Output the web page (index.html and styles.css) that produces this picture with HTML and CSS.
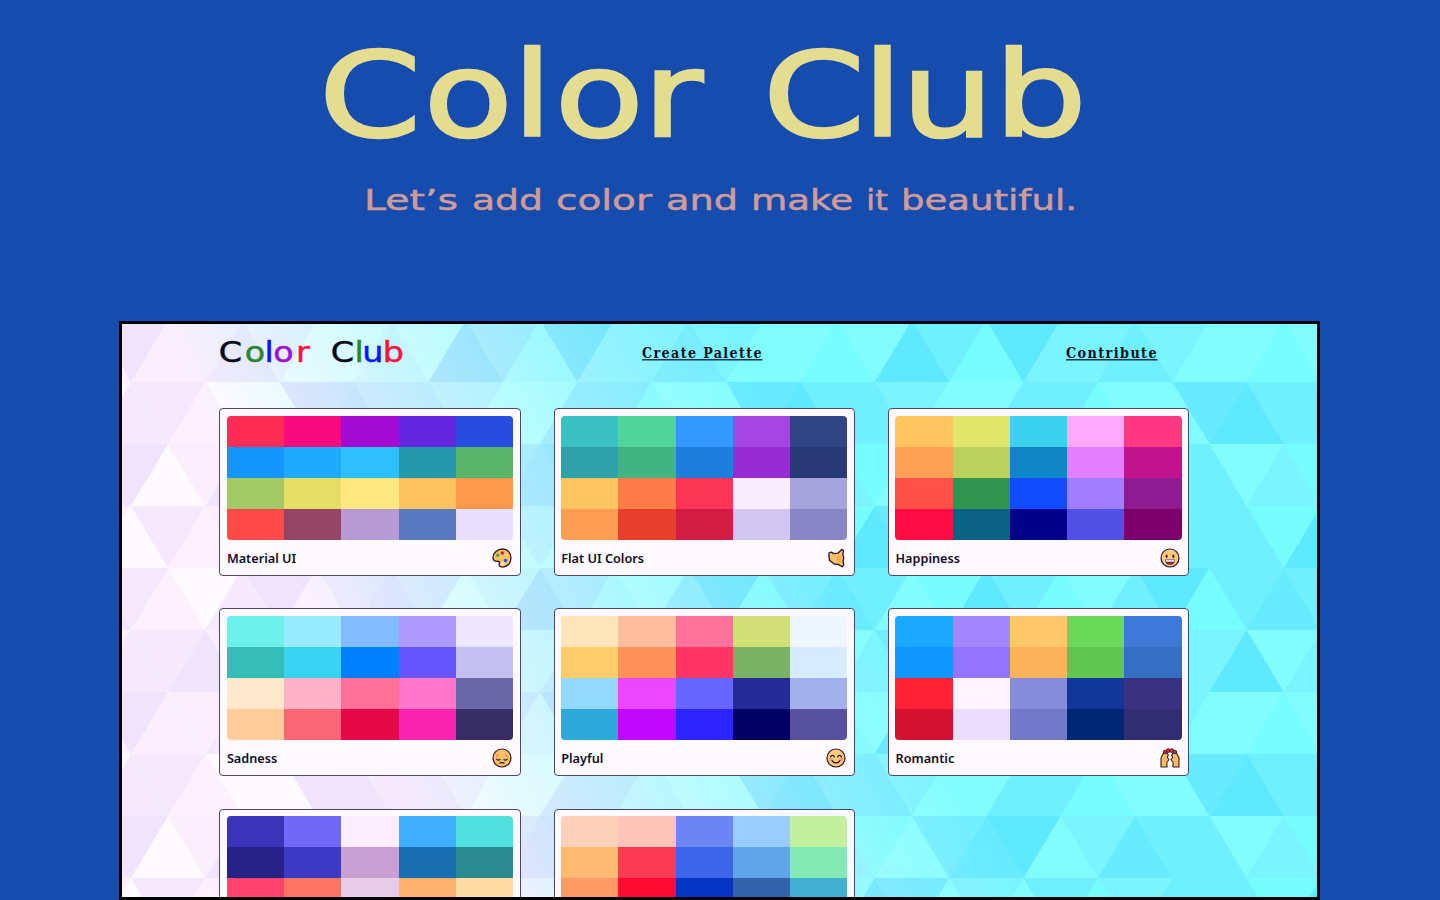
FILE: index.html
```html
<!DOCTYPE html>
<html lang="en">
<head>
<meta charset="utf-8">
<title>Color Club</title>
<link rel="stylesheet" href="styles.css">
</head>
<body>
<header class="hero">
  <svg class="hero-art" viewBox="0 0 1440 321" role="img" aria-label="Color Club">
    <text class="hero-title" transform="scale(1.24 1)" y="136.500" x="257.200 341.500 413 447.200 518.300 590 615.300 695.300 726.800 801.600">Color Club</text>
    <g class="hero-tag">
      <text x="364" y="210" textLength="94" lengthAdjust="spacingAndGlyphs">Let’s</text>
      <text x="472" y="210" textLength="71" lengthAdjust="spacingAndGlyphs">add</text>
      <text x="556" y="210" textLength="96" lengthAdjust="spacingAndGlyphs">color</text>
      <text x="666" y="210" textLength="72" lengthAdjust="spacingAndGlyphs">and</text>
      <text x="751" y="210" textLength="102" lengthAdjust="spacingAndGlyphs">make</text>
      <text x="866" y="210" textLength="22" lengthAdjust="spacingAndGlyphs">it</text>
      <text x="901" y="210" textLength="176" lengthAdjust="spacingAndGlyphs">beautiful.</text>
    </g>
  </svg>
</header>
<main class="frame">
  <svg class="mosaic" viewBox="122 324 1195 573" aria-hidden="true">
    <defs>
      <linearGradient id="fade" gradientUnits="userSpaceOnUse" x1="306" y1="600" x2="750" y2="373">
        <stop offset="0" stop-color="#fff"/>
        <stop offset=".45" stop-color="#868686"/>
        <stop offset=".72" stop-color="#3c3c3c"/>
        <stop offset="1" stop-color="#000"/>
      </linearGradient>
      <mask id="pinkMask" maskUnits="userSpaceOnUse" x="100" y="300" width="1240" height="620">
        <rect x="100" y="300" width="1240" height="620" fill="url(#fade)"/>
      </mask>
    </defs>
    <rect x="122" y="324" width="1195" height="573" fill="#78f7ff"/>
    <g id="cool"></g>
    <g mask="url(#pinkMask)"><rect x="122" y="324" width="1195" height="573" fill="#fbf0fe"/><g id="warm"></g></g>
  </svg>
  <div class="content">
    <nav class="nav">
      <svg class="logo" viewBox="0 0 200 58">
        <text class="logo-text" transform="scale(1.15 1)" y="38" x="7.6 30.2 47.3 55 74.9 98 105 125.6 132.5 150.3">C<tspan class="green">o</tspan><tspan class="blue">l</tspan><tspan class="purple">o</tspan><tspan class="red">r</tspan> C<tspan class="green">l</tspan><tspan class="blue">u</tspan><tspan class="red">b</tspan></text>
      </svg>
      <a class="nav-cell"><svg class="link" viewBox="0 0 130 58"><text x="0" y="34" textLength="121" lengthAdjust="spacingAndGlyphs">Create Palette</text><path d="M0 35.800h120.500"/></svg></a>
      <a class="nav-cell"><svg class="link" viewBox="0 0 130 58"><text x="0" y="34" textLength="92" lengthAdjust="spacingAndGlyphs">Contribute</text><path d="M0 35.800h91.500"/></svg></a>
    </nav>
    <section class="cards">
      <article class="card"><div class="swatches" data-colors="ff2d55 f90b7f a20bd2 6425df 284be0 1496ff 1cabff 2ec0ff 2497aa 5ab56b a3c967 e5de66 fee881 ffc45f ff994e ff4a49 964463 b59ad4 5879bf e9e0ff"></div>
        <div class="card-foot"><span>Material UI</span>
          <svg class="icon" viewBox="0 0 20 20"><path d="M10.8 1C5.6 1 1 4.7 1 9.4c0 2.600 2.100 4.300 4.600 3.900 1.300-.2 2.300.4 1.800 1.800-.8 2.200.3 4 2.900 4 5 0 8.700-4 8.700-9C19 4.700 15.400 1 10.800 1z" fill="#ffc067" stroke="#24152d" stroke-width="1.300"/><circle cx="10.300" cy="5" r="1.800" fill="#ef1b36"/><circle cx="5.700" cy="7.300" r="1.700" fill="#43ad3d"/><circle cx="13.600" cy="12.500" r="1.800" fill="#2057ea"/><circle cx="10.900" cy="15.500" r="1.500" fill="#fff5e6"/><circle cx="14.700" cy="7.500" r="1.300" fill="#ffdb66"/></svg>
        </div></article>
      <article class="card"><div class="swatches" data-colors="3bc1c4 4fd598 3399ff a546e1 2f4585 2ea2a8 42b483 1f7edb 972cd5 283a75 ffc560 ff7c49 fa3555 f9eeff a5a5dc ff9e52 e7402c d21c44 d0c6f0 8986c7"></div>
        <div class="card-foot"><span>Flat UI Colors</span>
          <svg class="icon" viewBox="0 0 20 20"><path d="M3 5l2-.8 3 1.500 4-.5 3.700-3.700 1.800.8-.7 4.500 1 3-.7 3.500.6 3.600-1.500 1.900-4-2.400-4-.4L3.700 12.500 3 9z" fill="#ffc067" stroke="#24152d" stroke-width="1.300" stroke-linejoin="round"/><path d="M16.300 8l-3.500 1M16.300 10.800l-4 .6M16 13.500l-3.300-.2M12.800 7.500l-1.500 3 .8 3" fill="none" stroke="#f09048" stroke-width=".8"/></svg>
        </div></article>
      <article class="card"><div class="swatches" data-colors="ffc560 dfe669 3cd1ec ffa8ff ff3982 ffa056 bdd15e 1186c7 e27eff c0148f ff4f49 319550 114dff a07eff 8f1b91 fc0c43 0b6184 000089 5150e5 7b006c"></div>
        <div class="card-foot"><span>Happiness</span>
          <svg class="icon" viewBox="0 0 20 20"><circle cx="10" cy="10" r="9" fill="#ffc978" stroke="#24152d" stroke-width="1.200"/><ellipse cx="6.600" cy="8.300" rx="1" ry="1.700" fill="#24152d"/><ellipse cx="13.400" cy="8.300" rx="1" ry="1.700" fill="#24152d"/><path d="M5 11.500h10c0 3.500-2 5.300-5 5.300s-5-1.800-5-5.300z" fill="#5c1430"/><path d="M5.300 11.500h9.400l-.5 2.600H5.800z" fill="#e9e0f0" stroke="#75677d" stroke-width=".5"/><path d="M8 16c1-1.300 3-1.300 4 0z" fill="#f32946"/></svg>
        </div></article>
      <article class="card"><div class="swatches" data-colors="6cf2ea 99ecff 82bcff ad9aff ede6ff 35bdb8 3ad4f3 0080ff 6755ff c4c1f0 ffe8ce ffb1c7 ff7099 ff76ca 6967a8 ffcd9b f96675 e60949 f824af 362d63"></div>
        <div class="card-foot"><span>Sadness</span>
          <svg class="icon" viewBox="0 0 20 20"><circle cx="10" cy="10" r="9" fill="#ffc067" stroke="#24152d" stroke-width="1.200"/><path d="M4 8.500l3-1.500M16 8.500l-3-1.500" stroke="#ef7d42" fill="none"/><path d="M4.500 10.800c.8 1.800 3 1.800 3.800.2M11.700 11c.8 1.600 3 1.600 3.800-.2M7.500 15.300c1-1 4-1 5 0" fill="none" stroke="#24152d" stroke-width="1.200"/></svg>
        </div></article>
      <article class="card"><div class="swatches" data-colors="ffe5ba ffbd9e ff729b d2df76 eef6ff ffcc69 ff925a ff3566 7bb365 d8ebff 94daff eb47ff 6666ff 242b98 a3b0ec 2fa8da c108ff 2d25ff 000064 58519f"></div>
        <div class="card-foot"><span>Playful</span>
          <svg class="icon" viewBox="0 0 20 20"><circle cx="10" cy="10" r="9" fill="#ffc978" stroke="#24152d" stroke-width="1.200"/><circle cx="4.700" cy="11.300" r="1.800" fill="#ff9094"/><circle cx="15.300" cy="11.300" r="1.800" fill="#ff9094"/><path d="M4.700 8.800c.8-1.800 2.800-1.800 3.600 0M11.700 8.800c.8-1.800 2.800-1.800 3.600 0M6 12.700c1.800 3 6.200 3 8 0" fill="none" stroke="#24152d" stroke-width="1.300" stroke-linecap="round"/></svg>
        </div></article>
      <article class="card"><div class="swatches" data-colors="1ba9ff a387ff ffc66c 6bda5b 3e79d7 0f97ff 9275ff fbb35b 5fc652 356fc2 ff2236 fff4ff 868cd8 113799 3a327f d41330 ebdeff 7279c9 002776 322c72"></div>
        <div class="card-foot"><span>Romantic</span>
          <svg class="icon" viewBox="0 0 20 20"><path d="M1 19v-9l2.500-5 3-.5L8.300 7l-1 2.500 1.700 2-2.200 3 .3 4.500zM19 19v-9l-2.500-5-3-.5L11.700 7l1 2.500-1.700 2 2.200 3-.3 4.500z" fill="#ffbd5c" stroke="#30182b" stroke-width="1.100" stroke-linejoin="round"/><g fill="#e8263a" stroke="#30182b" stroke-width=".9"><circle cx="5.200" cy="4" r="1.800"/><circle cx="14.800" cy="4" r="1.800"/><circle cx="8.300" cy="2.600" r="1.900"/><circle cx="11.700" cy="2.600" r="1.900"/></g></svg>
        </div></article>
      <article class="card"><div class="swatches" data-colors="3a34b9 7069f5 feefff 40aeff 50e0dd 272386 3e38c6 c79fd3 196eb2 2b8b90 ff426e ff7563 e8cce9 ffb170 ffdaa4 e52b50 e75b49 b798c7 e69c50 eebb7a"></div></article>
      <article class="card"><div class="swatches" data-colors="ffd1ba ffc4ba 6b86f2 99cdff c3ef9f ffbb71 f93b54 3d65e9 60a5ea 82eab2 ff9966 ff0a33 0634c2 3463aa 42aed0 f57843 c3002a 002487 254984 308aa7"></div></article>
    </section>
  </div>
</main>
<script src="app.js"></script>
</body>
</html>
```
FILE: styles.css
```css
* { box-sizing: border-box; }
body {
  margin: 0;
  height: 900px;
  overflow: hidden;
  background: #154cae;
  font-family: "Noto Sans", "Open Sans", sans-serif;
}
.hero { height: 321px; }
.hero-art { display: block; width: 1440px; height: 321px; }
.hero-title {
  font: 118px "DejaVu Sans", sans-serif;
  fill: #e4dc91;
  stroke: #e4dc91;
  stroke-width: 2.500px;
}
.hero-tag {
  font: 29px "DejaVu Sans", sans-serif;
  fill: #d19c98;
  stroke: #d19c98;
  stroke-width: .5px;
}
.frame {
  position: relative;
  width: 1201px;
  height: 579px;
  margin-left: 119px;
  border: 3px solid #000;
  overflow: hidden;
}
.mosaic { position: absolute; top: 0; left: 0; width: 1195px; height: 573px; }
.content { position: relative; padding-left: 97.400px; }
.nav { display: flex; height: 58px; align-items: center; }
.logo { flex: none; width: 200px; height: 58px; margin: 0 232px 0 -9.400px; }
.logo-text { font: 29px "DejaVu Sans", sans-serif; fill: #050818; stroke: #050818; stroke-width: .5px; }
.green { fill: #2b8630; stroke: #2b8630; }
.blue { fill: #0b13ff; stroke: #0b13ff; }
.purple { fill: #a010d6; stroke: #a010d6; }
.red { fill: #ff1038; stroke: #ff1038; }
.nav-cell { flex: none; width: 424px; }
.nav-cell:last-child { width: 130px; }
.link { display: block; width: 130px; height: 58px; }
.link text {
  font: bold 15px "DejaVu Serif Condensed", "DejaVu Serif", serif;
  letter-spacing: 1.500px;
  fill: #04101c;
}
.link path { stroke: #173646; stroke-width: 1.400px; }
.cards {
  display: grid;
  grid-template-columns: repeat(3, 301.500px);
  grid-auto-rows: 167.500px;
  gap: 32.800px;
  padding-top: 26px;
}
.card {
  padding: 6.500px 6.800px 0 6.500px;
  background: #fffaff;
  border: 1px solid #4b466c;
  border-radius: 4px;
}
.swatches {
  display: grid;
  grid-template-columns: repeat(5, 1fr);
  grid-template-rows: repeat(4, 1fr);
  height: 124.200px;
  border-radius: 4px;
  overflow: hidden;
}
.card-foot {
  display: flex;
  align-items: center;
  justify-content: space-between;
  height: 36.600px;
  padding-right: 1.500px;
  font-size: 12.700px;
  font-weight: 600;
  color: #120d24;
}
.icon { width: 20px; height: 20px; }
```
FILE: app.js
```javascript
(function () {
  // Fill the palette previews.
  document.querySelectorAll('.swatches').forEach(function (box) {
    box.dataset.colors.split(' ').forEach(function (c) {
      var s = document.createElement('i');
      s.style.background = '#' + c;
      box.appendChild(s);
    });
  });

  // Triangle mosaic: twelve half-steps per row, six repeating rows of tones.
  var COOL = ['', '#5ee9fe', '#67ecff', '#70efff', '#7af5ff', '#76fdff', '#82fdff'];
  var WARM = ['', '#f0e3fc', '#f3e4fd', '#f6e9fd', '#fbeffe', '#fdf1ff', '#fffaff'];
  var ROWS = [
    '144346656135',
    '335662133466',
    '164233645632',
    '635433351264',
    '356315323651',
    '331444164355'
  ];
  var STEP = 74.38, H = 62, X0 = 131, Y0 = 320;
  var cool = '', warm = '';
  for (var r = 0; r < 10; r++) {
    for (var h = -1; h < 34; h++) {
      var tone = +ROWS[r % 6][(h + 12) % 12];
      var x = X0 + h * STEP / 2, y1 = Y0 + r * H, y2 = y1 + H;
      // Even rows point up on half steps, odd rows on whole steps.
      var up = (Math.abs(h) % 2 === 1) === (r % 2 === 0);
      var apex = up ? y1 : y2, base = up ? y2 : y1;
      var pts = x + ',' + apex + ' ' + (x - STEP / 2) + ',' + base + ' ' + (x + STEP / 2) + ',' + base;
      cool += '<polygon points="' + pts + '" fill="' + COOL[tone] + '"/>';
      warm += '<polygon points="' + pts + '" fill="' + WARM[tone] + '"/>';
    }
  }
  document.getElementById('cool').innerHTML = cool;
  document.getElementById('warm').innerHTML = warm;
})();
```
